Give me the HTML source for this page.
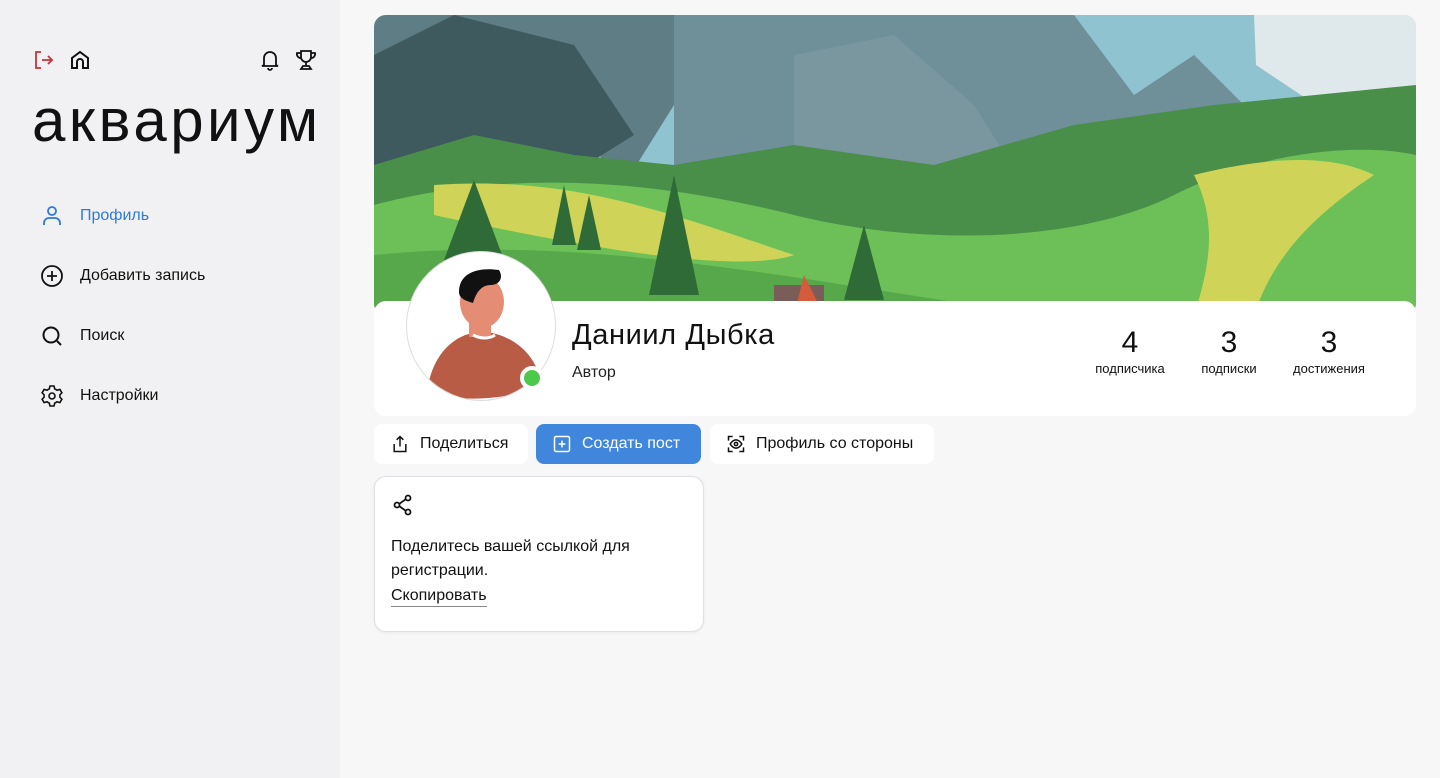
<!DOCTYPE html>
<html><head><meta charset="utf-8"><style>
*{box-sizing:border-box;margin:0;padding:0}
body{width:1440px;height:778px;background:#f7f7f8;font-family:"Liberation Sans",sans-serif;color:#111;position:relative;overflow:hidden}
.side{position:absolute;left:0;top:0;width:340px;height:778px;background:#f1f1f3}
.logo{position:absolute;left:32px;top:86px;font-size:60px;letter-spacing:3.5px;color:#111}
.nav{position:absolute;left:40px;display:flex;align-items:center;font-size:16px}
.nav svg{width:24px;height:24px;margin-right:16px}
.ic{position:absolute;width:24px;height:24px}
.banner{position:absolute;left:374px;top:15px;width:1042px;height:300px;border-radius:12px;overflow:hidden}
.card{position:absolute;left:374px;top:301px;width:1042px;height:115px;background:#fff;border-radius:12px}
.av{position:absolute;left:406px;top:251px;width:150px;height:150px;border-radius:50%;background:#fff;border:1px solid #ddd;overflow:hidden}
.dot{position:absolute;left:520px;top:366px;width:24px;height:24px;border-radius:50%;background:#4cc84a;border:4px solid #fff}
.name{position:absolute;left:572px;top:319px;font-size:29px;letter-spacing:0.6px}
.role{position:absolute;left:572px;top:364px;font-size:16px;color:#222}
.stat{position:absolute;top:326px;text-align:center;width:100px}
.stat b{display:block;font-weight:400;font-size:30px}
.stat span{font-size:13px}
.btn{position:absolute;top:424px;height:40px;border-radius:8px;background:#fff;display:flex;align-items:center;font-size:16px;padding-left:16px}
.btn svg{width:20px;height:20px;margin-right:10px}
.box{position:absolute;left:374px;top:476px;width:330px;height:156px;background:#fff;border:1px solid #dfe0e6;border-radius:12px;box-shadow:0 1px 3px rgba(0,0,0,.06)}
</style></head><body>
<div class="side">
<svg class="ic" style="left:32px;top:48px" viewBox="0 0 24 24" fill="none" stroke="#c8333a" stroke-width="1.8"><path d="M9 4H4v16h5M10 12h10M16 8l4 4-4 4"/></svg>
<svg class="ic" style="left:68px;top:48px" viewBox="0 0 24 24" fill="none" stroke="#111" stroke-width="2"><path d="M4 20V10l8-6 8 6v10h-5v-6a3 3 0 0 0-6 0v6z"/></svg>
<svg class="ic" style="left:258px;top:48px" viewBox="0 0 24 24" fill="none" stroke="#111" stroke-width="1.8"><path d="M6 17V10a6 6 0 0 1 12 0v7l2 1H4zM10 20a2 2 0 0 0 4 0"/></svg>
<svg class="ic" style="left:294px;top:48px" viewBox="0 0 24 24" fill="none" stroke="#111" stroke-width="1.8"><path d="M7 3h10v6a5 5 0 0 1-10 0zM7 5H3a4 4 0 0 0 4 5M17 5h4a4 4 0 0 1-4 5M12 14v4M7 21h10l-2-3H9z"/></svg>
<div class="logo">аквариум</div>
<div class="nav" style="top:204px;color:#2f7ad6"><svg viewBox="0 0 24 24" fill="none" stroke="#2f7ad6" stroke-width="1.8"><circle cx="12" cy="7" r="4"/><path d="M4 21v-2a5 5 0 0 1 5-5h6a5 5 0 0 1 5 5v2"/></svg>Профиль</div>
<div class="nav" style="top:264px"><svg viewBox="0 0 24 24" fill="none" stroke="#111" stroke-width="1.8"><circle cx="12" cy="12" r="10"/><path d="M12 7v10M7 12h10"/></svg>Добавить запись</div>
<div class="nav" style="top:324px"><svg viewBox="0 0 24 24" fill="none" stroke="#111" stroke-width="2"><circle cx="11" cy="11" r="7.5"/><path d="M17 17l4 4"/></svg>Поиск</div>
<div class="nav" style="top:384px"><svg viewBox="0 0 24 24" fill="none" stroke="#111" stroke-width="1.6"><circle cx="12" cy="12" r="3"/><path d="M10 2h4l.7 2.8 2.4 1.4 2.8-.8 2 3.4-2 2v2.4l2 2-2 3.4-2.8-.8-2.4 1.4L14 22h-4l-.7-2.8-2.4-1.4-2.8.8-2-3.4 2-2v-2.4l-2-2 2-3.4 2.8.8 2.4-1.4z"/></svg>Настройки</div>
</div>
<div class="banner"><svg width="1042" height="300" viewBox="0 0 1042 300" preserveAspectRatio="none">
<rect width="1042" height="300" fill="#8fc3cf"/>
<path d="M0 0H560L520 120 430 60 380 160 300 90 250 170 150 50 60 140 0 120z" fill="#5f7d84"/>
<path d="M0 40L80 0 200 30 260 120 180 170 0 170z" fill="#3f5a5f"/>
<path d="M300 0H700L760 80 820 40 900 120 980 60 1042 90V200H300z" fill="#6f8f99"/>
<path d="M420 40L520 20 600 90 650 170 420 180z" fill="#7a97a0"/>
<path d="M880 0h162v80l-40 20-60-10-60-40z" fill="#dfe8ea"/>
<path d="M0 150L100 120 200 140 300 150 420 130 560 150 700 110 840 90 1042 70V300H0z" fill="#4a8f49"/>
<path d="M0 190C150 150 300 170 420 200S700 230 800 180 1000 130 1042 140V300H0z" fill="#6cc057"/>
<path d="M60 170C200 160 300 200 420 240 360 260 200 230 60 200z" fill="#cfd459"/>
<path d="M820 160C900 140 960 140 1000 160 940 200 900 240 880 300H820C840 240 840 200 820 160z" fill="#cfd459"/>
<path d="M0 240C200 220 400 260 600 290L600 300H0z" fill="#56a84b"/>
<g fill="#2f6b37"><path d="M100 165l-30 80h60z"/><path d="M300 160l-25 120h50z"/><path d="M490 210l-20 75h40z"/><path d="M190 170l-12 60h24z"/><path d="M215 180l-12 55h24z"/></g>
<path d="M400 270h50v30h-50z" fill="#7a5d58"/><path d="M430 260l20 40h-30z" fill="#d45c3c"/>
</svg></div>
<div class="card"></div>
<div class="av"><svg width="150" height="150" viewBox="0 0 150 150"><path d="M20 140C25 100 50 80 75 80s55 20 58 50c-20 20-90 20-113 10z" fill="#b85c45"/><path d="M62 60h22v25H62z" fill="#e58c74"/><ellipse cx="75" cy="50" rx="22" ry="26" fill="#e58c74"/><path d="M52 40c0-20 20-25 40-22 5 8 0 15-8 15-10 0-15 8-18 18-6-2-14-4-14-11z" fill="#111"/><path d="M66 83c8 4 16 4 22 0" stroke="#fff" stroke-width="3" fill="none"/></svg></div>
<div class="dot"></div>
<div class="name">Даниил Дыбка</div>
<div class="role">Автор</div>
<div class="stat" style="left:1080px"><b>4</b><span>подписчика</span></div>
<div class="stat" style="left:1179px"><b>3</b><span>подписки</span></div>
<div class="stat" style="left:1279px"><b>3</b><span>достижения</span></div>
<div class="btn" style="left:374px;width:154px"><svg viewBox="0 0 24 24" fill="none" stroke="#111" stroke-width="1.8"><path d="M12 3v12M8 7l4-4 4 4M5 12v9h14v-9"/></svg>Поделиться</div>
<div class="btn" style="left:536px;width:165px;background:#3f86dc;color:#fff"><svg viewBox="0 0 24 24" fill="none" stroke="#fff" stroke-width="1.8"><rect x="3" y="3" width="18" height="18" rx="2"/><path d="M12 8v8M8 12h8"/></svg>Создать пост</div>
<div class="btn" style="left:710px;width:224px"><svg viewBox="0 0 24 24" fill="none" stroke="#111" stroke-width="1.8"><path d="M3 8V3h5M16 3h5v5M21 16v5h-5M8 21H3v-5"/><path d="M5 12s3-5 7-5 7 5 7 5-3 5-7 5-7-5-7-5z"/><circle cx="12" cy="12" r="2"/></svg>Профиль со стороны</div>
<div class="box">
<svg style="position:absolute;left:16px;top:16px" width="24" height="24" viewBox="0 0 24 24" fill="none" stroke="#111" stroke-width="1.8"><circle cx="6" cy="12" r="2.5"/><circle cx="17" cy="5" r="2.5"/><circle cx="17" cy="19" r="2.5"/><path d="M8.3 10.8l6.5-4.6M8.3 13.2l6.5 4.6"/></svg>
<div style="position:absolute;left:16px;top:58px;font-size:16px;line-height:24px;width:290px">Поделитесь вашей ссылкой для регистрации.</div>
<div style="position:absolute;left:16px;top:110px;font-size:16px;border-bottom:1px solid #888;padding-bottom:1px">Скопировать</div>
</div>
</body></html>
